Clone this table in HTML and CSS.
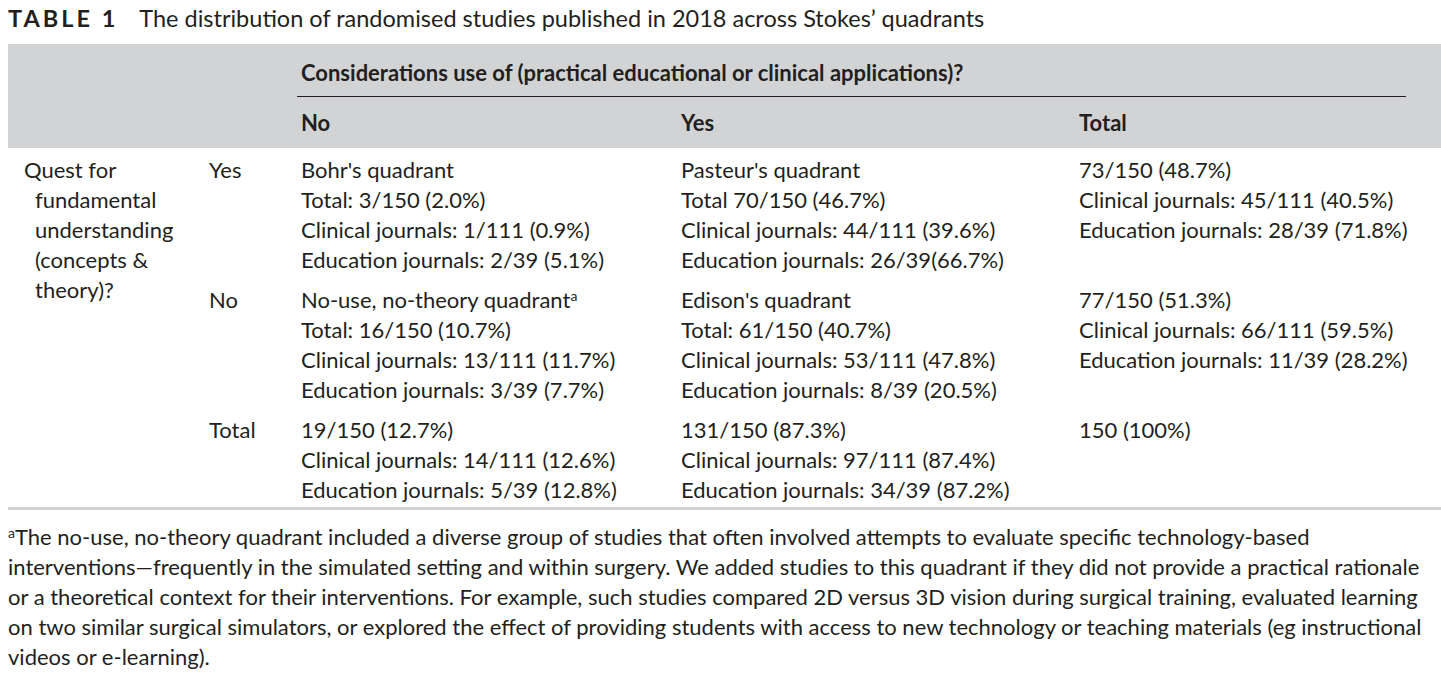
FILE: index.html
```html
<!DOCTYPE html>
<html lang="en">
<head>
<meta charset="utf-8">
<title>Table 1</title>
<link rel="stylesheet" href="styles.css">
</head>
<body>
<div class="page">
  <p class="caption"><span class="label">TABLE 1</span><span class="caption-text">The distribution of randomised studies published in 2018 across Stokes’ quadrants</span></p>
  <table class="stokes">
    <colgroup>
      <col class="c1"><col class="c2"><col class="c3"><col class="c4"><col class="c5">
    </colgroup>
    <thead>
      <tr class="head-top">
        <th></th>
        <th></th>
        <th colspan="3"><div class="span-head">Considerations use of (practical educational or clinical applications)?</div></th>
      </tr>
      <tr class="head-bottom">
        <th></th>
        <th></th>
        <th>No</th>
        <th>Yes</th>
        <th>Total</th>
      </tr>
    </thead>
    <tbody>
      <tr class="row-first">
        <td rowspan="2" class="stub">Quest for fundamental understanding (concepts &amp; theory)?</td>
        <td>Yes</td>
        <td><span class="ln">Bohr's quadrant</span><span class="ln">Total: 3/150 (2.0%)</span><span class="ln">Clinical journals: 1/111 (0.9%)</span><span class="ln">Education journals: 2/39 (5.1%)</span></td>
        <td><span class="ln">Pasteur's quadrant</span><span class="ln">Total 70/150 (46.7%)</span><span class="ln">Clinical journals: 44/111 (39.6%)</span><span class="ln">Education journals: 26/39(66.7%)</span></td>
        <td><span class="ln">73/150 (48.7%)</span><span class="ln">Clinical journals: 45/111 (40.5%)</span><span class="ln">Education journals: 28/39 (71.8%)</span></td>
      </tr>
      <tr class="row-mid">
        <td>No</td>
        <td><span class="ln">No-use, no-theory quadrant<sup>a</sup></span><span class="ln">Total: 16/150 (10.7%)</span><span class="ln">Clinical journals: 13/111 (11.7%)</span><span class="ln">Education journals: 3/39 (7.7%)</span></td>
        <td><span class="ln">Edison's quadrant</span><span class="ln">Total: 61/150 (40.7%)</span><span class="ln">Clinical journals: 53/111 (47.8%)</span><span class="ln">Education journals: 8/39 (20.5%)</span></td>
        <td><span class="ln">77/150 (51.3%)</span><span class="ln">Clinical journals: 66/111 (59.5%)</span><span class="ln">Education journals: 11/39 (28.2%)</span></td>
      </tr>
      <tr class="row-last">
        <td></td>
        <td>Total</td>
        <td><span class="ln">19/150 (12.7%)</span><span class="ln">Clinical journals: 14/111 (12.6%)</span><span class="ln">Education journals: 5/39 (12.8%)</span></td>
        <td><span class="ln">131/150 (87.3%)</span><span class="ln">Clinical journals: 97/111 (87.4%)</span><span class="ln">Education journals: 34/39 (87.2%)</span></td>
        <td><span class="ln">150 (100%)</span></td>
      </tr>
    </tbody>
  </table>
  <p class="footnote"><sup>a</sup>The no-use, no-theory quadrant included a diverse group of studies that often involved attempts to evaluate specific technology-based <span class="keep">interventions—frequently</span> in the simulated setting and within surgery. We added studies to this quadrant if they did not provide a practical rationale or a theoretical context for their interventions. For example, such studies compared 2D versus 3D vision during surgical training, evaluated learning on two similar surgical simulators, or explored the effect of providing students with access to new technology or teaching materials (eg instructional videos or <span class="keep">e-learning).</span></p>
</div>
</body>
</html>
```

FILE: styles.css
```css
html, body {
  margin: 0;
  padding: 0;
  background: #ffffff;
}

.page {
  padding: 6px 0 0 8px;
  font-family: Lato, "Liberation Sans", sans-serif;
  font-size: 22px;
  line-height: 30px;
  color: #231f20;
  font-variant-numeric: tabular-nums;
}

.caption {
  margin: 0;
  font-size: 23.5px;
  line-height: 24px;
  white-space: nowrap;
}

.label {
  font-weight: 700;
  letter-spacing: 3px;
  margin-right: 21px;
}

.stokes {
  width: 1433px;
  margin-top: 14px;
  border-collapse: collapse;
  border-spacing: 0;
  table-layout: fixed;
}

.c1 { width: 193px; }
.c2 { width: 92px; }
.c3 { width: 380px; }
.c4 { width: 398px; }
.c5 { width: 370px; }

.stokes thead th {
  background: #d2d3d5;
  text-align: left;
  font-weight: 700;
  vertical-align: top;
  padding-left: 8px;
  padding-right: 0;
}

.stokes .head-top th {
  padding-top: 14px;
  padding-bottom: 0;
}

.span-head {
  margin-left: -4px;
  margin-right: 35px;
  padding: 0 0 8px 4px;
  border-bottom: 1px solid #231f20;
}

.stokes .head-bottom th {
  padding-top: 11px;
  padding-bottom: 10px;
}

.stokes td {
  vertical-align: top;
  text-align: left;
  padding: 0 8px 10px 8px;
}

.stokes .row-first td {
  padding-top: 7px;
}

.stokes .row-last td {
  padding-bottom: 2px;
  border-bottom: 3px solid #d2d3d5;
}

.stokes td.stub {
  padding-left: 27px;
  text-indent: -11px;
}

.ln {
  display: block;
  white-space: nowrap;
}

sup {
  font-size: 14px;
  line-height: 0;
  vertical-align: 7px;
}

.footnote {
  margin: 12px 0 0 0;
  padding-right: 6px;
}

.keep {
  white-space: nowrap;
}
```
